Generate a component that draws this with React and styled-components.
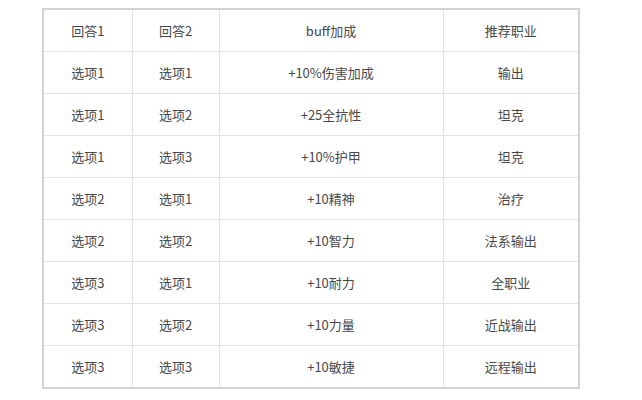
import React from 'react';
import styled, { createGlobalStyle } from 'styled-components';

const GlobalStyle = createGlobalStyle`
  html, body {
    margin: 0;
    padding: 0;
    background: #ffffff;
  }
`;

const Page = styled.div`
  width: 642px;
  height: 400px;
  padding: 8px 0 0 42px;
  box-sizing: border-box;
  font-family: 'Noto Sans CJK SC', 'Noto Sans', sans-serif;
`;

const Table = styled.table`
  width: 536px;
  border-collapse: collapse;
  border: 2px solid #d2d2d2;
  table-layout: fixed;
`;

const Cell = styled.td`
  height: 41px;
  padding: 0;
  border: 1px solid #e2e2e2;
  text-align: center;
  vertical-align: middle;
  font-size: 13px;
  color: #484848;
  font-weight: 400;
`;

const widths = [89, 87, 224, 136];

const rows = [
  ['回答1', '回答2', 'buff加成', '推荐职业'],
  ['选项1', '选项1', '+10%伤害加成', '输出'],
  ['选项1', '选项2', '+25全抗性', '坦克'],
  ['选项1', '选项3', '+10%护甲', '坦克'],
  ['选项2', '选项1', '+10精神', '治疗'],
  ['选项2', '选项2', '+10智力', '法系输出'],
  ['选项3', '选项1', '+10耐力', '全职业'],
  ['选项3', '选项2', '+10力量', '近战输出'],
  ['选项3', '选项3', '+10敏捷', '远程输出'],
];

const App = () => {
  return (
    <>
      <GlobalStyle />
      <Page>
        <Table>
          <colgroup>
            {widths.map((w, i) => (
              <col key={i} style={{ width: w }} />
            ))}
          </colgroup>
          <tbody>
            {rows.map((r, i) => (
              <tr key={i}>
                {r.map((c, j) => (
                  <Cell key={j}>{c}</Cell>
                ))}
              </tr>
            ))}
          </tbody>
        </Table>
      </Page>
    </>
  );
};

export default App;
